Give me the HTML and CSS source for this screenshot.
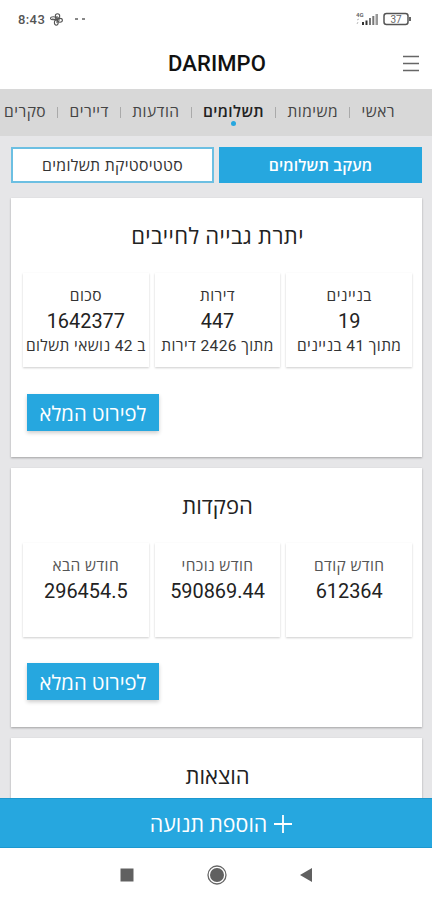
FILE: index.html
```html
<!DOCTYPE html>
<html lang="he" dir="rtl">
  <head>
    <meta charset="UTF-8" />
    <title>DARIMPO</title>
    <meta name="viewport" content="width=device-width, initial-scale=1" />
    <link rel="stylesheet" href="styles.css">
  </head>
  <body>
    <div class="status" dir="ltr">
      <span class="clock">8:43</span>
      <svg class="fan" width="13" height="13" viewBox="0 0 13 13" fill="none" stroke="#555" stroke-width="1.1">
        <ellipse cx="7.5" cy="3" rx="2.2" ry="2.2" />
        <ellipse cx="3.2" cy="5.3" rx="2.7" ry="1.5" />
        <ellipse cx="10" cy="7.3" rx="2.4" ry="1.9" />
        <ellipse cx="6.3" cy="9.6" rx="1.9" ry="2.6" />
        <path d="M7 3v7M2 6l8 1" />
      </svg>
      <span class="dots"><i></i><i></i></span>
      <svg class="signal" width="23" height="14" viewBox="0 0 23 14">
        <text x="0" y="5" font-size="6" font-weight="700">4G</text>
        <path d="M1 8l2-1M1 12l1-2" stroke="#bbb" stroke-width="1" />
        <path d="M6 10h2v3H6zM9.5 8.5h2V13h-2z" fill="#333" />
        <path d="M13 6h2v7h-2zM16.3 4h2v9h-2z" fill="#777" />
        <path d="M19.5 2H22v11h-2.5z" fill="#999" />
      </svg>
      <svg class="battery" width="29" height="14" viewBox="0 0 29 14">
        <rect x="1" y="1.5" width="24" height="11" rx="2.5" fill="none" stroke="#555" stroke-width="1.5" />
        <path d="M27 5v4" stroke="#666" stroke-width="2" />
        <text x="13" y="10.5" font-size="10" text-anchor="middle">37</text>
      </svg>
    </div>

    <header class="header">
      <svg class="menu" width="16" height="17" viewBox="0 0 16 17" stroke="#666" stroke-width="1.7">
        <path d="M0 1.5h16M0 8.5h16M0 15.5h16" />
      </svg>
      <h1>DARIMPO</h1>
    </header>

    <nav class="tabs">
      <a class="tab">ראשי</a><i></i>
      <a class="tab">משימות</a><i></i>
      <a class="tab active">תשלומים</a><i></i>
      <a class="tab">הודעות</a><i></i>
      <a class="tab">דיירים</a><i></i>
      <a class="tab">סקרים</a>
    </nav>

    <main class="content">
      <div class="switch">
        <button class="on">מעקב תשלומים</button>
        <button>סטטיסטיקת תשלומים</button>
      </div>

      <section class="card">
        <h2 class="wide">יתרת גבייה לחייבים</h2>
        <div class="boxes">
          <div class="box"><p>בניינים</p><b>19</b><p>מתוך 41 בניינים</p></div>
          <div class="box"><p>דירות</p><b>447</b><p>מתוך 2426 דירות</p></div>
          <div class="box"><p>סכום</p><b>1642377</b><p>ב 42 נושאי תשלום</p></div>
        </div>
        <button class="more">לפירוט המלא</button>
      </section>

      <section class="card deposits">
        <h2>הפקדות</h2>
        <div class="boxes">
          <div class="box"><p>חודש קודם</p><b>612364</b></div>
          <div class="box"><p>חודש נוכחי</p><b>590869.44</b></div>
          <div class="box"><p>חודש הבא</p><b>296454.5</b></div>
        </div>
        <button class="more">לפירוט המלא</button>
      </section>

      <section class="card">
        <h2>הוצאות</h2>
      </section>
    </main>

    <button class="add">
      <svg width="18" height="18" viewBox="0 0 18 18" stroke="#fff" stroke-width="1.8">
        <path d="M9 0v18M0 9h18" />
      </svg>
      <span>הוספת תנועה</span>
    </button>

    <footer class="keys" dir="ltr">
      <svg width="14" height="14" viewBox="0 0 14 14"><path d="M.5.5h13v13H.5z" fill="#606060" /></svg>
      <svg width="20" height="20" viewBox="0 0 20 20">
        <circle cx="10" cy="10" r="9" fill="none" stroke="#666" stroke-width="1.3" />
        <circle cx="10" cy="10" r="7" fill="#606060" />
      </svg>
      <svg width="14" height="14" viewBox="0 0 14 14"><path d="M12 0v14L0 7z" fill="#606060" /></svg>
    </footer>
  </body>
</html>
```
FILE: styles.css
```css
* {
  box-sizing: border-box;
}

html, body {
  height: 100%;
  margin: 0;
}

body {
  display: flex;
  flex-direction: column;
  overflow: hidden;
  background-color: #fff;
  color: #222;
  font-family: Roboto, "Open Sans", sans-serif;
}

h1, h2, p {
  margin: 0;
  font-weight: 400;
}

button {
  border: 0;
  padding: 0;
  font-family: inherit;
}

svg {
  display: block;
  flex: none;
}

.status {
  display: flex;
  align-items: center;
  flex: none;
  height: 38px;
  padding: 0 20px 0 18px;
}

.clock {
  width: 28px;
  font-size: 13px;
  font-weight: 500;
  letter-spacing: 0.4px;
  color: #555;
}

.fan {
  margin-left: 4px;
}

.dots {
  display: flex;
  gap: 4px;
  margin-left: 12px;
}

.dots i {
  width: 3px;
  height: 2px;
  background-color: #888;
}

.signal {
  margin-left: auto;
  margin-right: 4px;
}

.signal text, .battery text {
  fill: #666;
}

.header {
  display: flex;
  align-items: center;
  flex: none;
  height: 51px;
  padding: 0 13px;
}

.header h1 {
  flex: 1;
  padding-left: 18px;
  text-align: center;
  font-size: 22px;
  font-weight: 500;
  letter-spacing: 0.1px;
  line-height: 51px;
  color: #111;
}

.tabs {
  display: flex;
  align-items: center;
  justify-content: space-between;
  flex: none;
  height: 47px;
  padding: 0 37px 4px 4px;
  background-color: #d8d8d8;
}

.tabs i {
  width: 1px;
  height: 11px;
  margin-top: 3px;
  background-color: #aaa;
}

.tab {
  position: relative;
  font-size: 15.5px;
  letter-spacing: 0.5px;
  white-space: nowrap;
  color: #444;
}

.tab.active {
  font-weight: 600;
  letter-spacing: 0.4px;
  color: #222;
}

.tab.active::after {
  content: '';
  position: absolute;
  left: 50%;
  bottom: -4px;
  width: 5px;
  height: 5px;
  margin-left: -3px;
  border-radius: 50%;
  background-color: #26a7df;
}

.content {
  flex: 1;
  min-height: 0;
  overflow: hidden;
  padding: 11px 10px 0 11px;
  background-color: #e6e6e8;
}

.switch {
  display: flex;
  gap: 5px;
  margin-bottom: 15px;
}

.switch button {
  flex: 1;
  height: 36px;
  border: 2px solid #6cbfe2;
  background-color: #fff;
  font-size: 15.8px;
  letter-spacing: 0.3px;
  color: #333;
}

.switch .on {
  border-color: #26a7df;
  background-color: #26a7df;
  font-weight: 600;
  letter-spacing: 0.15px;
  color: #fff;
}

.card {
  height: 259px;
  margin-bottom: 11px;
  padding: 23px 10px 0 12px;
  background-color: #fff;
  box-shadow: 0 1px 2px rgba(0, 0, 0, 0.3);
}

.card h2 {
  height: 52px;
  text-align: center;
  font-size: 22px;
  line-height: 32px;
}

.card h2.wide {
  letter-spacing: 0.4px;
}

.boxes {
  display: flex;
  gap: 6px;
}

.box {
  flex: 1 1 0;
  min-width: 0;
  height: 94px;
  padding-top: 11px;
  text-align: center;
  box-shadow: 0 1px 2px rgba(0, 0, 0, 0.2);
}

.box p {
  height: 24px;
  font-size: 15.5px;
  letter-spacing: 0.4px;
  line-height: 24px;
  white-space: nowrap;
  color: #333;
}

.deposits .box p {
  color: #555;
}

.box b {
  display: block;
  height: 26px;
  font-size: 19.9px;
  font-weight: 400;
  line-height: 27px;
}

.more {
  display: block;
  width: 132px;
  height: 37px;
  margin: 27px auto 0 4px;
  background-color: #26a7df;
  box-shadow: 0 2px 4px rgba(0, 0, 0, 0.2);
  font-size: 20.3px;
  color: #fff;
}

.deposits .more {
  margin-top: 26px;
}

.add {
  display: flex;
  align-items: center;
  justify-content: center;
  gap: 7px;
  flex: none;
  height: 50px;
  padding-left: 10px;
  border-top: 1px solid #1c98cf;
  border-bottom: 1px solid #1c98cf;
  background-color: #26a7df;
  font-size: 21.4px;
  color: #fff;
}

.add svg {
  margin-top: 2px;
}

.keys {
  display: flex;
  align-items: center;
  justify-content: center;
  gap: 73px;
  flex: none;
  height: 52px;
  padding: 2px 0 0 2px;
}
```
